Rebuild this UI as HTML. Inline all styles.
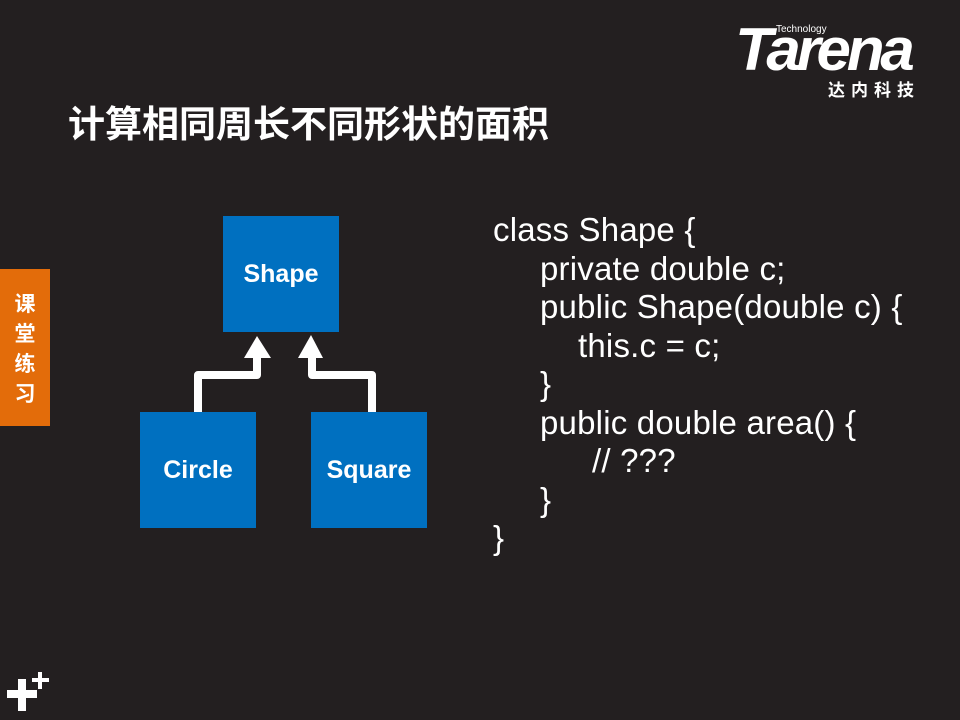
<!DOCTYPE html>
<html><head><meta charset="utf-8"><style>
html,body{margin:0;width:960px;height:720px;overflow:hidden}
body{background:#231f20;position:relative;font-family:"Liberation Sans","Noto Sans CJK SC",sans-serif;color:#fff}
.box{position:absolute;background:#0070c0;color:#fff;font-weight:bold;font-size:25px;display:flex;align-items:center;justify-content:center}
.title{position:absolute;left:68px;top:94px;font-size:37px;font-weight:bold}
.code{position:absolute;left:493px;top:211px;font-size:33px;line-height:38.5px;letter-spacing:0.2px}
.code div{height:38.5px;white-space:pre}
.tab{position:absolute;left:0;top:269px;width:50px;height:157px;background:#e36c0a;font-size:21px;font-weight:bold;text-align:center;line-height:30px;padding-top:21px;box-sizing:border-box}
</style></head><body>
<div style="position:absolute;left:735px;top:26px;font-size:60px;font-weight:bold;font-style:italic;letter-spacing:-4px;line-height:48px;transform:scaleX(1.03);transform-origin:left">Tarena</div>
<div style="position:absolute;left:776px;top:24px;font-size:10px">Technology</div>
<div style="position:absolute;left:828px;top:76px;font-size:17px;font-weight:bold;letter-spacing:6px">达内科技</div>
<div class="title">计算相同周长不同形状的面积</div>
<div class="tab">课<br>堂<br>练<br>习</div>
<div class="box" style="left:223px;top:216px;width:116px;height:116px">Shape</div>
<div class="box" style="left:140px;top:412px;width:116px;height:116px">Circle</div>
<div class="box" style="left:311px;top:412px;width:116px;height:116px">Square</div>
<svg style="position:absolute;left:0;top:0" width="960" height="720">
<path d="M198 412 V375 H257 V356" fill="none" stroke="#fff" stroke-width="8" stroke-linejoin="round"/>
<polygon points="244,358 271,358 257,336" fill="#fff"/>
<path d="M372 412 V375 H312 V356" fill="none" stroke="#fff" stroke-width="8" stroke-linejoin="round"/>
<polygon points="298,358 323,358 311,335" fill="#fff"/>
<rect x="7" y="690" width="30" height="8" fill="#fff"/><rect x="18" y="679" width="8" height="32" fill="#fff"/>
<rect x="32" y="678" width="17" height="4" fill="#fff"/><rect x="38" y="672" width="4" height="17" fill="#fff"/>
</svg>
<div class="code"><div>class Shape {</div><div style="padding-left:47px">private double c;</div><div style="padding-left:47px">public Shape(double c) {</div><div style="padding-left:85px">this.c = c;</div><div style="padding-left:47px">}</div><div style="padding-left:47px">public double area() {</div><div style="padding-left:99px">// ???</div><div style="padding-left:47px">}</div><div>}</div></div>
</body></html>
